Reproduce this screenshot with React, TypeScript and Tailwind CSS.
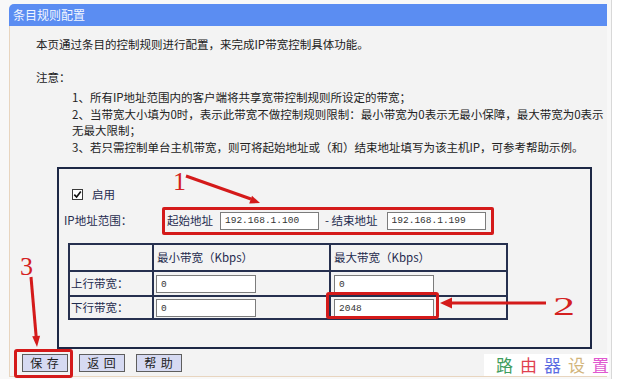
import type { ReactNode } from 'react'

function Field({ value, className }: { value: string; className: string }) {
  return (
    <input
      readOnly
      value={value}
      className={`h-[18px] border border-[#7c7c7c] bg-white px-[4px] font-['Liberation_Mono',monospace] text-[9.5px] text-[#333] outline-none ${className}`}
    />
  )
}

function Cell({ children, className }: { children?: ReactNode; className: string }) {
  return <td className={`border-2 border-[#26304f] p-0 align-middle ${className}`}>{children}</td>
}

function Btn({ label }: { label: string }) {
  return (
    <button className="h-[18px] w-[46px] border border-[#5e5e5e] bg-[#d6daf2] text-[12px] leading-[16px] tracking-[1px] text-[#222]">
      {label}
    </button>
  )
}

export default function App() {
  return (
    <div className="relative flex h-[379px] w-[622px] overflow-hidden bg-[#f8f8f8] font-['Noto_Sans_CJK_SC',sans-serif] text-[#222]">
      <div className="w-[9px] shrink-0" />

      <div className="flex w-[598px] shrink-0 flex-col pt-[4px]">
        <div className="h-[22px] rounded-tl-[5px] bg-[#5b8df2] pl-[4px] text-[12px] leading-[22px] text-[#f2f6ff]">
          条目规则配置
        </div>

        <div className="flex h-[351px] flex-col border-b border-l border-[#e8d5bf] bg-[#f3f3f3] text-[11.5px]">
          <p className="pl-[26px] pt-[10px] leading-[16px]">本页通过条目的控制规则进行配置，来完成IP带宽控制具体功能。</p>
          <p className="mt-[17px] pl-[26px] leading-[16px]">注意：</p>
          <div className="mt-[4px] whitespace-nowrap pl-[62px] leading-[16.7px]">
            <p>1、所有IP地址范围内的客户端将共享宽带控制规则所设定的带宽；</p>
            <p>2、当带宽大小填为0时，表示此带宽不做控制规则限制：最小带宽为0表示无最小保障，最大带宽为0表示</p>
            <p>无最大限制；</p>
            <p>3、若只需控制单台主机带宽，则可将起始地址或（和）结束地址填写为该主机IP，可参考帮助示例。</p>
          </div>

          <div className="ml-[47px] mt-[11px] h-[183px] w-[535px] border-2 border-[#1d2745] text-[#1f2b4f]">
            <div className="ml-[13px] mt-[18px] flex h-[16px] items-center">
              <span className="flex h-[11px] w-[11px] items-center justify-center border border-[#3a3a3a] bg-white">
                <svg width="9" height="9" viewBox="0 0 9 9">
                  <path d="M1.3 4.6 L3.6 7 L7.8 1.6" fill="none" stroke="#111" strokeWidth="1.7" />
                </svg>
              </span>
              <span className="ml-[9px]">启用</span>
            </div>

            <div className="mt-[4px] flex h-[28px] items-center">
              <span className="ml-[5px] w-[98px]">IP地址范围：</span>
              <div className="flex h-[28px] items-center rounded-[2px] border-[3px] border-[#d41a1a] pl-[2px] pr-[5px]">
                <span>起始地址</span>
                <Field value="192.168.1.100" className="ml-[7px] w-[99px]" />
                <span className="ml-[6px]">- 结束地址</span>
                <Field value="192.168.1.199" className="ml-[9px] w-[99px]" />
              </div>
            </div>

            <table className="ml-[9px] mt-[8px] w-[438px] table-fixed border-collapse border-2 border-[#26304f]">
              <tbody>
                <tr>
                  <Cell className="h-[27px] w-[84px]" />
                  <Cell className="w-[177px] pl-[3px]">最小带宽（Kbps）</Cell>
                  <Cell className="w-[177px] pl-[3px]">最大带宽（Kbps）</Cell>
                </tr>
                <tr>
                  <Cell className="h-[25px] pl-[1px]">上行带宽：</Cell>
                  <Cell className="pl-[2px]">
                    <Field value="0" className="w-[100px]" />
                  </Cell>
                  <Cell className="pl-[3px]">
                    <Field value="0" className="w-[100px]" />
                  </Cell>
                </tr>
                <tr>
                  <Cell className="h-[23px] pl-[1px]">下行带宽：</Cell>
                  <Cell className="pl-[2px]">
                    <Field value="0" className="w-[100px]" />
                  </Cell>
                  <Cell className="pl-[3px]">
                    <Field value="2048" className="w-[100px]" />
                  </Cell>
                </tr>
              </tbody>
            </table>
          </div>

          <div className="mt-[5px] flex items-start pl-[12px]">
            <div className="flex gap-[11px]">
              <Btn label="保 存" />
              <Btn label="返 回" />
              <Btn label="帮 助" />
            </div>
            <div className="-mr-[2px] ml-auto flex h-[22px] items-center bg-white pl-[12px] text-[17px] leading-[18px]">
              <span className="mr-[7px] text-[#3f9d5e]">路</span>
              <span className="mr-[7px] text-[#e0404e]">由</span>
              <span className="mr-[7px] text-[#5a6be2]">器</span>
              <span className="mr-[7px] text-[#d2b57c]">设</span>
              <span className="text-[#e058cf]">置</span>
            </div>
          </div>
        </div>
      </div>

      <div className="w-[4px] shrink-0" />
      <div className="flex-1 border-l border-[#d8d8d8] bg-white" />

      {/* annotations drawn over the page */}
      <svg className="pointer-events-none absolute left-0 top-0" width="622" height="379" viewBox="0 0 622 379">
        <g stroke="#d41a1a" fill="none" strokeWidth="3">
          <rect x="327.5" y="293.5" width="110" height="24" rx="1.5" />
          <rect x="15.5" y="350.5" width="56" height="26" rx="1.5" />
          <line x1="186" y1="176" x2="251" y2="199" />
          <line x1="450" y1="303" x2="546" y2="303" />
          <line x1="31" y1="277" x2="36.2" y2="337" />
        </g>
        <g fill="#d41a1a">
          <polygon points="260,203 249.2,203.4 252,195.8" />
          <polygon points="440,303 452,297.5 452,308.5" />
          <polygon points="37,347 32.2,336.3 40.1,335.7" />
        </g>
        <g fill="#d42020" fontFamily="'Liberation Serif', serif" fontSize="26">
          <text x="173" y="190">1</text>
          <text x="553" y="315" textLength="22" lengthAdjust="spacingAndGlyphs">2</text>
          <text x="20" y="275">3</text>
        </g>
      </svg>
    </div>
  )
}
